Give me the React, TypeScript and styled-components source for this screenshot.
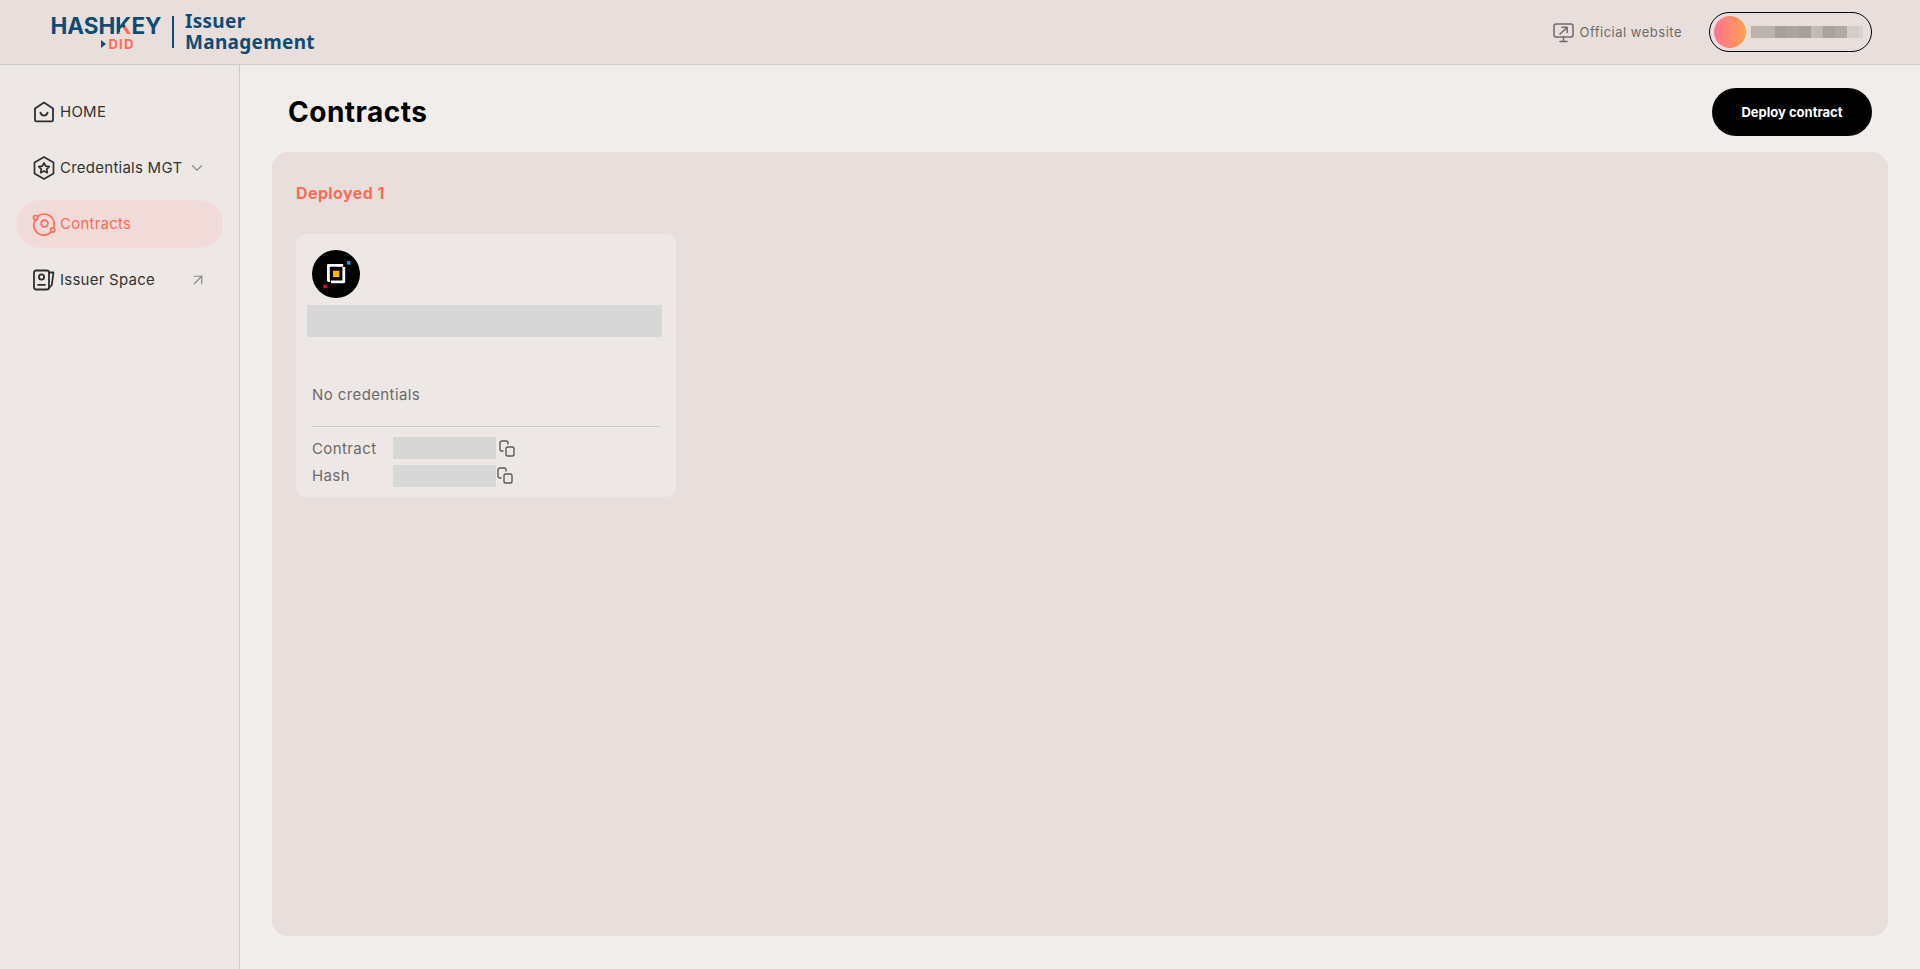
import styled, { createGlobalStyle } from 'styled-components';
import { ChevronDown, ArrowUpRight } from 'lucide-react';

const GlobalStyle = createGlobalStyle`
  html, body {
    margin: 0;
    padding: 0;
    height: 100%;
    background: #f1edea;
    font-family: 'Inter', 'Noto Sans', sans-serif;
  }
  * { box-sizing: border-box; }
`;

const blurBlocks = [
  { width: 12, color: '#bdb1aa' },
  { width: 12, color: '#b9b2ae' },
  { width: 12, color: '#a89e9a' },
  { width: 12, color: '#aaa5a1' },
  { width: 12, color: '#a99f99' },
  { width: 12, color: '#c0b9b4' },
  { width: 12, color: '#a8a19d' },
  { width: 12, color: '#aeaaa1' },
  { width: 12, color: '#d2ccca' },
  { width: 4, color: '#d6d0ce' },
];

function HomeIcon() {
  return (
    <svg width="22" height="22" viewBox="0 0 22 22" fill="none" stroke="#2f2f2f" strokeWidth="1.8" strokeLinejoin="round" strokeLinecap="round">
      <path d="M2 7.600 11 1.600l9 6V19a1.400 1.400 0 0 1-1.400 1.400H3.400A1.400 1.400 0 0 1 2 19Z" />
      <path d="M7.400 11.600c.8 2.200 2.200 3 3.600 3s2.800-.8 3.600-3" />
    </svg>
  );
}

function StarIcon() {
  return (
    <svg width="24" height="24" viewBox="0 0 24 24" fill="none" stroke="#2f2f2f" strokeWidth="1.700" strokeLinejoin="round">
      <path d="M12 1 21.500 6.500v11L12 23 2.500 17.500v-11Z" />
      <path d="m12 6.800 1.700 3.300 3.600.5-2.600 2.500.6 3.600-3.300-1.700-3.300 1.700.6-3.600-2.600-2.500 3.600-.5Z" />
    </svg>
  );
}

function OrbitIcon() {
  return (
    <svg width="24" height="24" viewBox="0 0 24 24" fill="none" stroke="#ff6b57" strokeWidth="1.700">
      <path d="M5.500 4.600A10 10 0 0 1 21.600 15.500" />
      <path d="M19 20.200A10 10 0 0 1 3.300 8" />
      <circle cx="12.500" cy="11.500" r="3.400" />
      <circle cx="3.700" cy="5.700" r="2.200" />
      <circle cx="20.600" cy="18" r="2.200" />
    </svg>
  );
}

function SpaceIcon() {
  return (
    <svg width="24" height="22" viewBox="0 0 24 22" fill="none" stroke="#2f2f2f" strokeWidth="1.800" strokeLinejoin="round" strokeLinecap="round">
      <rect x="2" y="1.500" width="15" height="19" rx="2" />
      <circle cx="9.500" cy="8" r="2.600" />
      <path d="M6 15.800h7" />
      <path d="M17 3.500h4.500L19.800 16 17 19" />
    </svg>
  );
}

function ScreenIcon() {
  return (
    <svg width="22" height="21" viewBox="0 0 22 21" fill="none" stroke="#6d6a69" strokeWidth="1.500" strokeLinecap="round" strokeLinejoin="round">
      <rect x="1" y="2" width="19" height="13" rx="2" />
      <path d="M7 12 14 5.500M9 5.200h5.200v5.200M10.500 15v4M7 19.500h7" />
    </svg>
  );
}

function CopyGlyph() {
  return (
    <svg width="16" height="17" viewBox="0 0 16 17" fill="none" stroke="#5c5a59" strokeWidth="1.400" strokeLinejoin="round" strokeLinecap="round">
      <rect x="7" y="7" width="8" height="9" rx="1.800" />
      <path d="M4 11H2.800A1.800 1.800 0 0 1 1 9.200V3a2 2 0 0 1 2-2h4.200A1.800 1.800 0 0 1 9 2.800V4" />
    </svg>
  );
}

function ContractLogo() {
  return (
    <svg width="48" height="48" viewBox="0 0 48 48">
      <circle cx="24" cy="24" r="24" fill="#000" />
      <path d="M18 30.600h-1.600V15.400h14.800" fill="none" stroke="#fff" strokeWidth="2.800" strokeLinejoin="round" />
      <path d="M19 31.800h12.800V17" fill="none" stroke="#fff" strokeWidth="2.800" strokeLinejoin="round" />
      <rect x="21" y="20.700" width="6.400" height="6.400" fill="#ffb400" />
      <rect x="35" y="11" width="3.400" height="3.600" fill="#00a7d0" />
      <rect x="11.300" y="34.700" width="3.400" height="3.400" fill="#e6005c" />
    </svg>
  );
}

export default function App() {
  return (
    <>
      <GlobalStyle />
      <Page>
        <Header>
          <LogoArea>
            <BrandBlock>
              <Brand>
                HASH<BrandK>K</BrandK>EY
              </Brand>
              <DidRow>
                <DidArrow />
                <Did>DID</Did>
              </DidRow>
            </BrandBlock>
            <LogoDivider />
            <LogoTitle>
              <div>Issuer</div>
              <div>Management</div>
            </LogoTitle>
          </LogoArea>
          <HeaderRight>
            <OfficialLink>
              <ScreenIcon />
              <span>Official website</span>
            </OfficialLink>
            <WalletPill>
              <Avatar />
              <BlurRow>
                {blurBlocks.map((block, i) => (
                  <BlurBlock key={i} $width={block.width} $color={block.color} />
                ))}
              </BlurRow>
            </WalletPill>
          </HeaderRight>
        </Header>
        <Body>
          <Sidebar>
            <NavItem>
              <NavIcon>
                <HomeIcon />
              </NavIcon>
              <NavLabel>HOME</NavLabel>
            </NavItem>
            <NavItem>
              <NavIcon>
                <StarIcon />
              </NavIcon>
              <NavLabel>Credentials MGT</NavLabel>
              <NavTrail>
                <ChevronDown size={18} strokeWidth={1.5} />
              </NavTrail>
            </NavItem>
            <NavItem $active>
              <NavIcon>
                <OrbitIcon />
              </NavIcon>
              <NavLabel>Contracts</NavLabel>
            </NavItem>
            <NavItem>
              <NavIcon>
                <SpaceIcon />
              </NavIcon>
              <NavLabel>Issuer Space</NavLabel>
              <NavTrailEnd>
                <ArrowUpRight size={18} strokeWidth={1.6} />
              </NavTrailEnd>
            </NavItem>
          </Sidebar>
          <Main>
            <TitleRow>
              <Title>Contracts</Title>
              <DeployButton>Deploy contract</DeployButton>
            </TitleRow>
            <Panel>
              <DeployedLabel>Deployed 1</DeployedLabel>
              <Card>
                <ContractLogo />
                <NameBar />
                <NoCredentials>No credentials</NoCredentials>
                <CardDivider />
                <InfoRow>
                  <InfoLabel>Contract</InfoLabel>
                  <InfoValue />
                  <CopyIcon>
                    <CopyGlyph />
                  </CopyIcon>
                </InfoRow>
                <InfoRow>
                  <HashLabel>Hash</HashLabel>
                  <InfoValue />
                  <CopyIconHash>
                    <CopyGlyph />
                  </CopyIconHash>
                </InfoRow>
              </Card>
            </Panel>
          </Main>
        </Body>
      </Page>
    </>
  );
}

const Page = styled.div`
  display: flex;
  flex-direction: column;
  height: 969px;
  overflow: hidden;
`;

const Header = styled.header`
  display: flex;
  align-items: center;
  justify-content: space-between;
  flex: 0 0 65px;
  padding: 0 48px 0 50px;
  background: #e8dfdc;
  border-bottom: 1px solid #cfcbc9;
`;

const LogoArea = styled.div`
  display: flex;
  align-items: center;
  color: #0f4c73;
`;

const BrandBlock = styled.div`
  display: flex;
  flex-direction: column;
  align-items: center;
  width: 112px;
`;

const Brand = styled.div`
  font-family: 'Inter', sans-serif;
  font-size: 22.500px;
  line-height: 23px;
  font-weight: 700;
  white-space: nowrap;
`;

const BrandK = styled.span`
  background: linear-gradient(135deg, #0f4c73 58%, #ff6b57 58%);
  -webkit-background-clip: text;
  background-clip: text;
  -webkit-text-fill-color: transparent;
`;

const DidRow = styled.div`
  display: flex;
  align-items: center;
  gap: 2px;
  margin-left: 24px;
`;

const DidArrow = styled.span`
  width: 0;
  height: 0;
  border-left: 5px solid #0f4c73;
  border-top: 4.500px solid transparent;
  border-bottom: 4.500px solid transparent;
`;

const Did = styled.span`
  font-family: 'Inter', sans-serif;
  font-size: 13px;
  line-height: 14px;
  font-weight: 700;
  letter-spacing: 1.200px;
  color: #ff6b57;
`;

const LogoDivider = styled.div`
  width: 2px;
  height: 32px;
  margin: 0 11px 0 10px;
  background: #0f4c73;
`;

const LogoTitle = styled.div`
  font-family: 'Noto Sans', sans-serif;
  font-size: 19px;
  line-height: 21px;
  font-weight: 700;
  letter-spacing: 0.3px;
`;

const HeaderRight = styled.div`
  display: flex;
  align-items: center;
  gap: 27px;
`;

const OfficialLink = styled.div`
  display: flex;
  align-items: center;
  gap: 4px;
  font-size: 13px;
  letter-spacing: 0.500px;
  color: #6d6a69;
`;

const WalletPill = styled.div`
  display: flex;
  align-items: center;
  width: 163px;
  height: 40px;
  padding: 0 4px;
  gap: 5px;
  border: 1px solid #000;
  border-radius: 20px;
`;

const Avatar = styled.div`
  width: 32px;
  height: 32px;
  flex-shrink: 0;
  border-radius: 50%;
  background: linear-gradient(90deg, #ff7390, #ff9f50);
`;

const BlurRow = styled.div`
  display: flex;
  height: 12px;
`;

const BlurBlock = styled.div<{ $width: number; $color: string }>`
  width: ${(p) => p.$width}px;
  background: ${(p) => p.$color};
`;

const Body = styled.div`
  display: flex;
  flex: 1;
  min-height: 0;
`;

const Sidebar = styled.nav`
  display: flex;
  flex-direction: column;
  gap: 8px;
  flex: 0 0 240px;
  padding: 23px 16px 0;
  background: #ede8e5;
  border-right: 1px solid #cfcbc9;
`;

const NavItem = styled.div<{ $active?: boolean }>`
  display: flex;
  align-items: center;
  width: 207px;
  height: 48px;
  padding-left: 16px;
  border-radius: 24px;
  color: ${(p) => (p.$active ? '#ff6b57' : '#333')};
  background: ${(p) => (p.$active ? '#f0dbd9' : 'transparent')};
`;

const NavIcon = styled.span`
  display: flex;
  align-items: center;
  justify-content: center;
  width: 24px;
  height: 24px;
`;

const NavLabel = styled.span`
  margin-left: 4px;
  margin-top: -2px;
  font-size: 15px;
  letter-spacing: 0.250px;
  white-space: nowrap;
`;

const NavTrail = styled.span`
  display: flex;
  margin-left: 6px;
  color: #888;
`;

const NavTrailEnd = styled(NavTrail)`
  margin-left: auto;
  margin-right: 16px;
`;

const Main = styled.main`
  flex: 1;
  min-width: 0;
  display: flex;
  flex-direction: column;
  padding: 23px 32px 33px;
`;

const TitleRow = styled.div`
  display: flex;
  align-items: center;
  justify-content: space-between;
  height: 48px;
  padding: 0 16px;
  margin-bottom: 16px;
`;

const Title = styled.h1`
  margin: 0;
  font-family: 'Inter', sans-serif;
  font-size: 28px;
  font-weight: 700;
  letter-spacing: 0.500px;
  color: #000;
`;

const DeployButton = styled.button`
  width: 160px;
  height: 48px;
  padding-bottom: 2px;
  border: none;
  border-radius: 24px;
  background: #000;
  color: #fff;
  font-family: 'Inter', sans-serif;
  font-size: 13px;
  font-weight: 700;
`;

const Panel = styled.section`
  flex: 1;
  padding: 29px 24px;
  background: #e8dfdc;
  border-radius: 16px;
`;

const DeployedLabel = styled.div`
  font-size: 16px;
  line-height: 24px;
  font-weight: 700;
  letter-spacing: 0.400px;
  color: #ff6b57;
  margin-bottom: 29px;
`;

const Card = styled.article`
  display: flex;
  flex-direction: column;
  width: 380px;
  height: 263px;
  padding: 16px;
  background: #ede8e5;
  border-radius: 10px;

  > svg {
    flex-shrink: 0;
  }
`;

const NameBar = styled.div`
  flex-shrink: 0;
  height: 32px;
  margin: 7px -2px 0 -5px;
  background: #d7d7d7;
`;

const NoCredentials = styled.div`
  margin-top: 46px;
  font-size: 15px;
  line-height: 24px;
  letter-spacing: 0.400px;
  color: #6d6a69;
`;

const CardDivider = styled.div`
  flex-shrink: 0;
  height: 1px;
  margin-top: 19px;
  margin-bottom: 10px;
  background: #cfcbc9;
`;

const InfoRow = styled.div`
  display: flex;
  flex-shrink: 0;
  align-items: center;
  height: 22px;
  margin-bottom: 6px;
`;

const InfoLabel = styled.span`
  width: 81px;
  font-size: 15px;
  letter-spacing: 0.400px;
  color: #6d6a69;
`;

const HashLabel = styled(InfoLabel)`
  margin-top: -2px;
`;

const InfoValue = styled.div`
  width: 103px;
  height: 22px;
  background: #d7d7d7;
`;

const CopyIcon = styled.span`
  display: flex;
  margin-left: 3px;
`;

const CopyIconHash = styled(CopyIcon)`
  margin-left: 1px;
  margin-top: -2px;
`;
